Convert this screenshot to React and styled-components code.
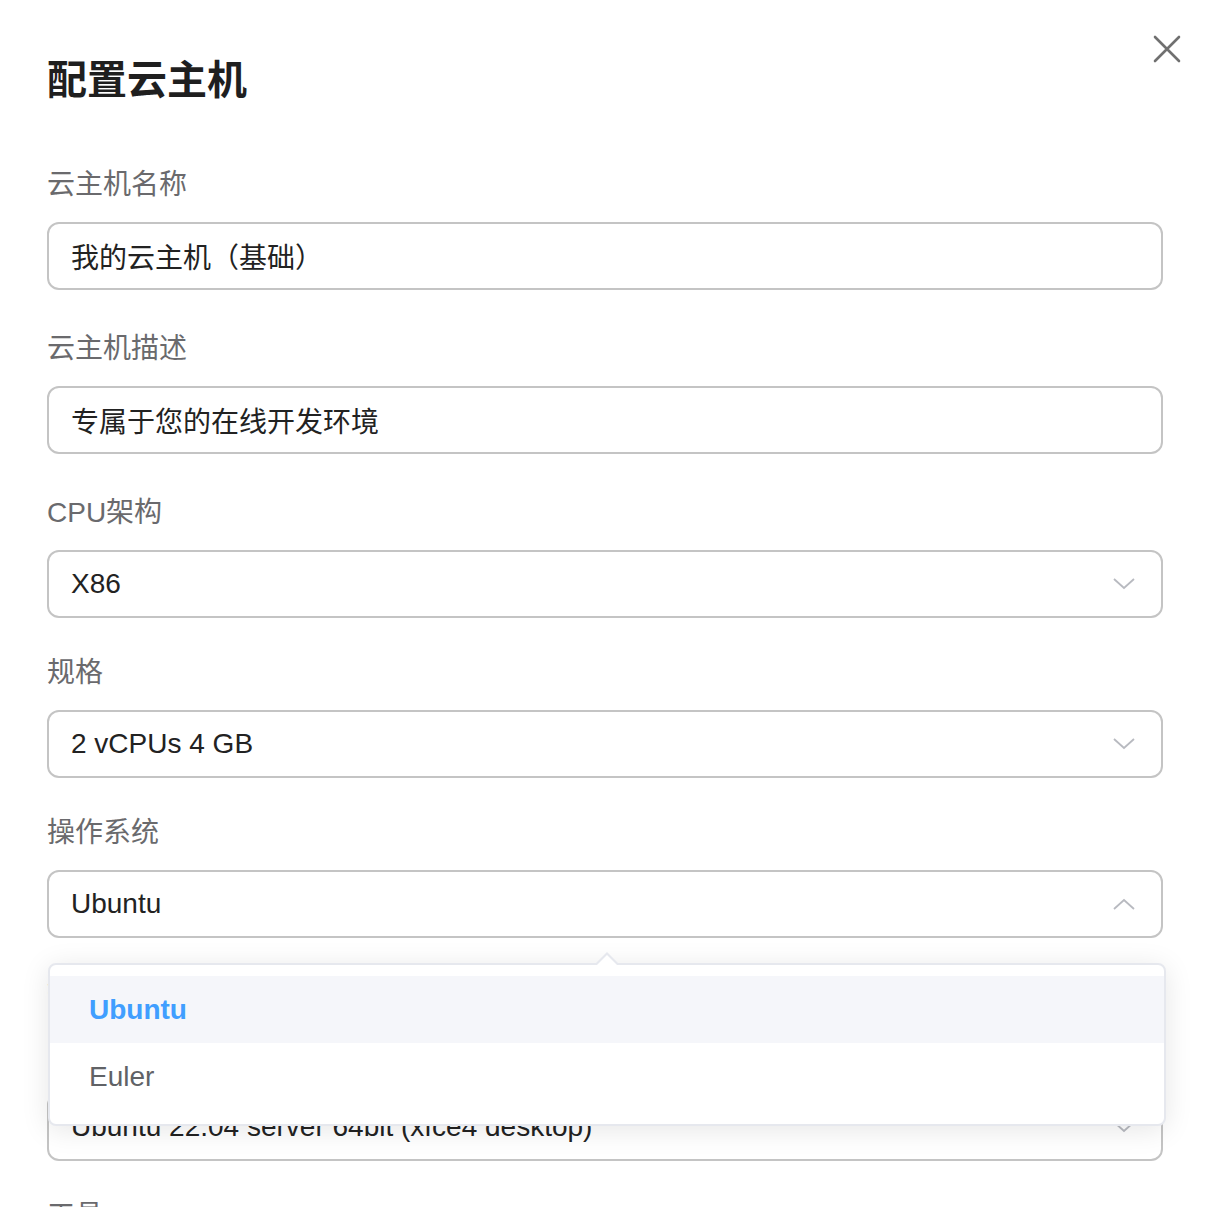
import React from "react";
import styled, { createGlobalStyle } from "styled-components";

const Global = createGlobalStyle`
  html, body { margin: 0; padding: 0; background: #fff; overflow: hidden; }
  body { font-family: "Liberation Sans", "Noto Sans CJK SC", sans-serif; }
`;

const Dialog = styled.div`
  position: relative;
  width: 1207px;
  height: 1207px;
  box-sizing: border-box;
  padding: 52px 44px 0 47px;
  overflow: hidden;
`;

const Title = styled.h1`
  margin: 0 0 55px;
  font-size: 40px;
  line-height: 56px;
  font-weight: 700;
  color: #1f1f1f;
  letter-spacing: 0;
`;

const CloseButton = styled.button`
  position: absolute;
  top: 34px;
  right: 25px;
  width: 30px;
  height: 30px;
  padding: 0;
  border: none;
  background: transparent;
  display: flex;
  align-items: center;
  justify-content: center;
  cursor: pointer;
`;

const Form = styled.form`
  display: flex;
  flex-direction: column;
`;

const Field = styled.div`
  position: relative;
  display: flex;
  flex-direction: column;
  margin-bottom: ${(p) => p.$after}px;
`;

const Label = styled.label`
  padding-top: 2px;
  font-size: 28px;
  line-height: 40px;
  color: #6a6a6d;
  margin-bottom: ${(p) => p.$gap}px;
`;

const Box = styled.div`
  height: 68px;
  box-sizing: border-box;
  border: 2px solid #c4c4c4;
  border-radius: 12px;
  padding: 0 26px 0 22px;
  display: flex;
  align-items: center;
  justify-content: space-between;
  font-size: 28px;
  color: #222;
  background: #fff;
`;

const Value = styled.span`
  white-space: nowrap;
`;

const Dropdown = styled.div`
  position: absolute;
  top: calc(100% + 25px);
  left: 1px;
  width: 1118px;
  box-sizing: border-box;
  background: #fff;
  border: 2px solid #e6e8ee;
  border-radius: 8px;
  box-shadow: 0 4px 28px rgba(0, 0, 0, 0.1);
  padding: 11px 0 14px;
  z-index: 5;

  &::before,
  &::after {
    content: "";
    position: absolute;
    left: 545px;
    width: 0;
    height: 0;
    border-left: 12px solid transparent;
    border-right: 12px solid transparent;
  }
  &::before {
    top: -13px;
    border-bottom: 12px solid #e6e8ee;
  }
  &::after {
    top: -10px;
    left: 546px;
    border-left-width: 11px;
    border-right-width: 11px;
    border-bottom: 11px solid #fff;
  }
`;

const Option = styled.div`
  height: 67px;
  display: flex;
  align-items: center;
  padding-left: 39px;
  font-size: 28px;
  color: ${(p) => (p.$active ? "#409eff" : "#606266")};
  font-weight: ${(p) => (p.$active ? 700 : 400)};
  background: ${(p) => (p.$active ? "#f5f6fa" : "#fff")};
`;

const Chevron = ({ up }) => (
  <svg width="22" height="12" viewBox="0 0 22 12" fill="none">
    <polyline
      points={up ? "1,11 11,2 21,11" : "1,1 11,10 21,1"}
      stroke="#b8bac0"
      strokeWidth="1.8"
      strokeLinejoin="miter"
    />
  </svg>
);

const fields = [
  { label: "云主机名称", value: "我的云主机（基础）", after: 37 },
  { label: "云主机描述", value: "专属于您的在线开发环境", after: 37 },
  { label: "CPU架构", value: "X86", select: true, after: 33 },
  { label: "规格", value: "2 vCPUs 4 GB", select: true, after: 33 },
  { label: "操作系统", value: "Ubuntu", select: true, open: true, after: 33 },
  { label: "镜像", value: "Ubuntu 22.04 server 64bit (xfce4 desktop)", select: true, gap: 80, after: 33 },
  { label: "工具", value: "", select: true, after: 33 },
];

export default function App() {
  return (
    <>
      <Global />
      <Dialog>
        <Title>配置云主机</Title>
        <CloseButton aria-label="关闭">
          <svg width="28" height="28" viewBox="0 0 28 28">
            <path d="M2 2 L26 26 M26 2 L2 26" stroke="#707070" strokeWidth="2.6" strokeLinecap="round" />
          </svg>
        </CloseButton>
        <Form>
          {fields.map((f) => (
            <Field key={f.label} $after={f.after}>
              <Label $gap={f.gap ?? 17}>{f.label}</Label>
              <Box>
                <Value>{f.value}</Value>
                {f.select && <Chevron up={f.open} />}
              </Box>
              {f.open && (
                <Dropdown>
                  <Option $active>Ubuntu</Option>
                  <Option>Euler</Option>
                </Dropdown>
              )}
            </Field>
          ))}
        </Form>
      </Dialog>
    </>
  );
}
